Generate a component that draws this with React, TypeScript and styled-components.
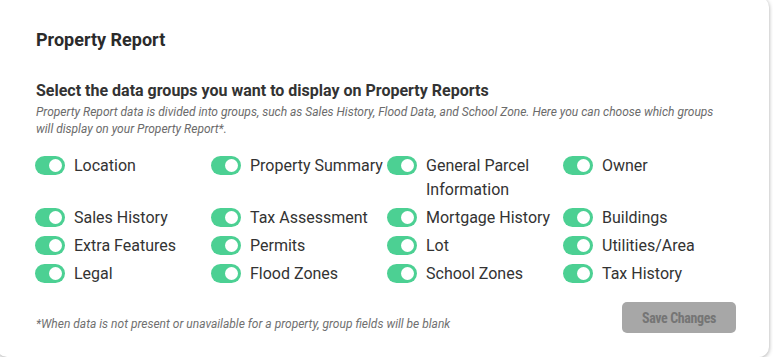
import { FC } from "react";
import styled, { createGlobalStyle } from "styled-components";

const GlobalStyle = createGlobalStyle`
    html, body {
        margin: 0;
        padding: 0;
        background: #ffffff;
        font-family: Roboto, "Liberation Sans", sans-serif;
    }
`;

const Card = styled.div`
    box-sizing: border-box;
    width: 772px;
    height: 360px;
    margin: -3px 0 0 -3px;
    padding: 31px 33px 0 39px;
    background: #ffffff;
    border-radius: 10px;
    box-shadow: 0 1px 4px rgba(0, 0, 0, 0.35);
    color: #333333;
    display: flex;
    flex-direction: column;
`;

const Title = styled.h2`
    margin: 0;
    font-size: 18px;
    line-height: 24px;
    font-weight: 700;
    color: #2b2b2b;
`;

const SubTitle = styled.h3`
    margin: 28px 0 0;
    font-size: 16px;
    line-height: 22px;
    font-weight: 700;
    color: #333333;
`;

const Description = styled.p`
    margin: 2px 0 0;
    max-width: 694px;
    font-size: 12px;
    line-height: 17px;
    font-style: italic;
    color: #6b6b6b;
`;

const Grid = styled.div`
    display: grid;
    grid-template-columns: repeat(4, 176px);
    row-gap: 4px;
    margin-top: 16px;
`;

const Item = styled.label`
    display: flex;
    align-items: flex-start;
    gap: 9px;
    font-size: 16px;
    line-height: 24px;
    color: #333333;
    cursor: pointer;
`;

const Track = styled.span<{ on: boolean }>`
    flex: none;
    position: relative;
    width: 30px;
    height: 19px;
    margin-top: 2px;
    margin-left: -1px;
    border-radius: 10px;
    background: ${(p) => (p.on ? "#4cd093" : "#c8c8c8")};
`;

const Thumb = styled.span<{ on: boolean }>`
    position: absolute;
    top: 3px;
    left: ${(p) => (p.on ? "14px" : "3px")};
    width: 13px;
    height: 13px;
    border-radius: 50%;
    background: #ffffff;
`;

const Footer = styled.div`
    display: flex;
    align-items: center;
    justify-content: space-between;
    margin-top: 16px;
`;

const Note = styled.span`
    font-size: 12px;
    font-style: italic;
    color: #707070;
    margin-top: 12px;
`;

const SaveButton = styled.button`
    width: 114px;
    height: 31px;
    border: none;
    border-radius: 5px;
    background: #a7a7a7;
    color: #757575;
    font-family: "Roboto Condensed", Roboto, "Liberation Sans", sans-serif;
    font-size: 14px;
    font-weight: 700;
    letter-spacing: -0.4px;
    cursor: not-allowed;
`;

const groups = [
    "Location",
    "Property Summary",
    "General Parcel Information",
    "Owner",
    "Sales History",
    "Tax Assessment",
    "Mortgage History",
    "Buildings",
    "Extra Features",
    "Permits",
    "Lot",
    "Utilities/Area",
    "Legal",
    "Flood Zones",
    "School Zones",
    "Tax History",
];

const Toggle: FC<{ on: boolean }> = ({ on }) => (
    <Track on={on}>
        <Thumb on={on} />
    </Track>
);

export default function App() {
    return (
        <>
            <GlobalStyle />
            <Card>
                <Title>Property Report</Title>
                <SubTitle>Select the data groups you want to display on Property Reports</SubTitle>
                <Description>
                    Property Report data is divided into groups, such as Sales History, Flood Data, and School Zone.
                    Here you can choose which groups will display on your Property Report*.
                </Description>
                <Grid>
                    {groups.map((g) => (
                        <Item key={g}>
                            <Toggle on />
                            <span>{g === "General Parcel Information" ? <>General Parcel<br />Information</> : g}</span>
                        </Item>
                    ))}
                </Grid>
                <Footer>
                    <Note>*When data is not present or unavailable for a property, group fields will be blank</Note>
                    <SaveButton disabled>Save Changes</SaveButton>
                </Footer>
            </Card>
        </>
    );
}
